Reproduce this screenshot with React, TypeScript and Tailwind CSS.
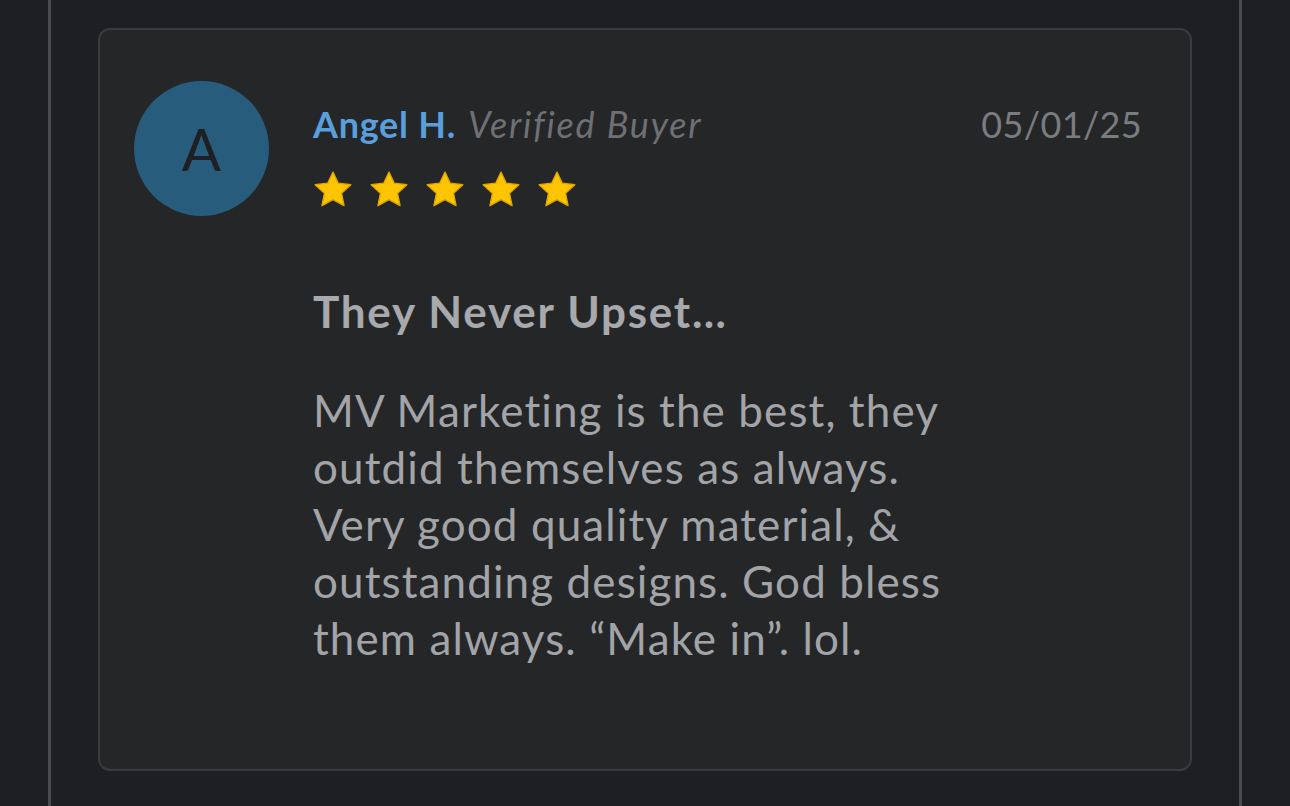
function Star() {
  return (
    <svg viewBox="0 0 24 23" className="h-[38px] w-[40px]" aria-hidden="true">
      <polygon
        points="12,1.2 15.2,8 22.8,8.9 17.2,14.1 18.7,21.6 12,17.9 5.3,21.6 6.8,14.1 1.2,8.9 8.8,8"
        fill="#fcc500"
        stroke="#e2a400"
        strokeWidth="0.8"
        strokeLinejoin="round"
      />
    </svg>
  );
}

function ReviewCard() {
  return (
    <div className="flex rounded-[12px] border-2 border-[#3a3b3d] bg-[#252628] pb-[102px] pl-[34px] pr-[48px] pt-[51px] [font-variant-ligatures:none]">
      <div className="flex h-[135px] w-[135px] shrink-0 items-center justify-center rounded-full bg-[#285c7c]">
        <span className="text-[58px] leading-none text-[#1e2024]">A</span>
      </div>
      <div className="ml-[44px] flex-1 pt-[21px]">
        <div className="flex items-start justify-between leading-[44px]">
          <div className="text-[36px]">
            <span className="font-bold tracking-[0.02em] text-[#5a9fdc]">Angel H.</span>
            <span className="ml-[12px] italic tracking-[0.05em] text-[#6e7074]">Verified Buyer</span>
          </div>
          <span className="text-[36px] tracking-[0.01em] text-[#7a7c80]">05/01/25</span>
        </div>
        <div className="mt-[24px] flex gap-[16px]">
          <Star />
          <Star />
          <Star />
          <Star />
          <Star />
        </div>
        <h3 className="mt-[75px] text-[44px] font-bold leading-[57px] tracking-[0.04em] text-[#a7a9ac]">
          They Never Upset…
        </h3>
        <p className="mt-[42px] w-[660px] text-[44px] leading-[57px] tracking-[0.025em] text-[#a2a4a7]">
          MV Marketing is the best, they outdid themselves as always. Very good quality material, &amp; outstanding
          designs. God bless them always. “Make in”. lol.
        </p>
      </div>
    </div>
  );
}

export default function App() {
  return (
    <div className="min-h-[806px] bg-[#1e1f23] px-[48px] font-['Lato',sans-serif]">
      <div className="min-h-[806px] border-x-[3px] border-[#4a4b4f] px-[47px] pt-[28px]">
        <ReviewCard />
      </div>
    </div>
  );
}
